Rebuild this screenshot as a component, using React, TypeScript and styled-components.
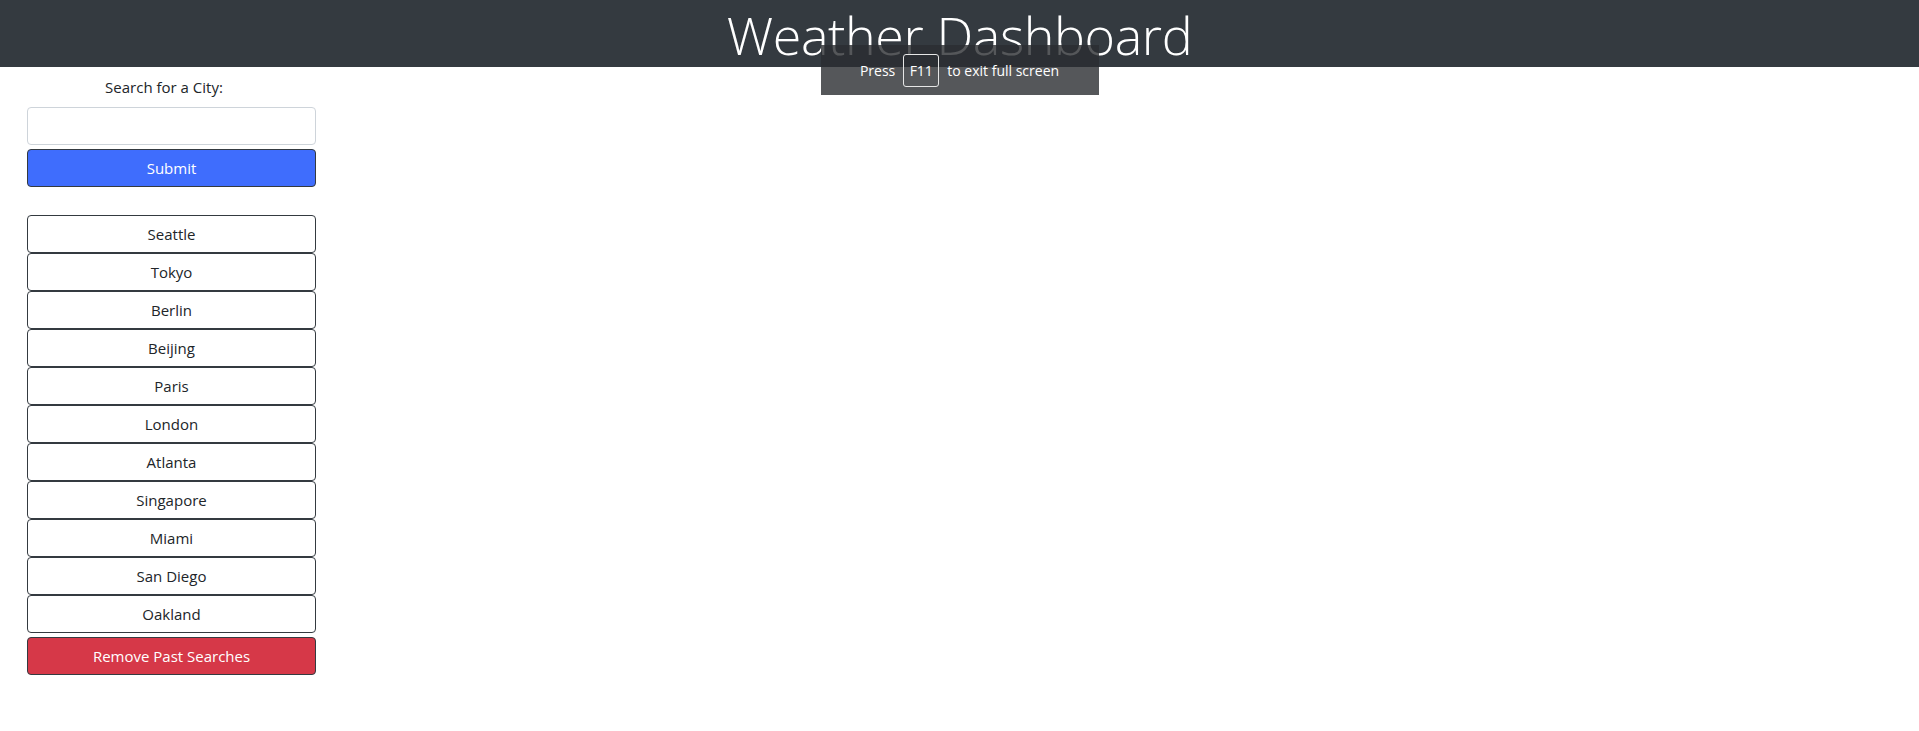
import React from "react";
import styled, { createGlobalStyle } from "styled-components";

const GlobalStyle = createGlobalStyle`
  html, body {
    margin: 0;
    padding: 0;
    background: #ffffff;
    font-family: "Open Sans", "Noto Sans", sans-serif;
    color: #212529;
  }
  * { box-sizing: border-box; }
`;

const Page = styled.div`
  position: relative;
  width: 100%;
  min-height: 731px;
`;

const Header = styled.header`
  background: #343a40;
  height: 67px;
  display: flex;
  justify-content: center;
  align-items: center;
`;

const Title = styled.h1`
  margin: 0;
  font-family: "Open Sans", sans-serif;
  font-weight: 300;
  font-size: 52px;
  line-height: 67px;
  color: #ffffff;
  letter-spacing: -0.4px;
  transform: translateY(1px);
`;

const Sidebar = styled.aside`
  width: 289px;
  margin-left: 27px;
  display: flex;
  flex-direction: column;
`;

const Label = styled.label`
  display: block;
  margin-top: 8px;
  padding-right: 15px;
  text-align: center;
  font-size: 15px;
  line-height: 24px;
  color: #212529;
`;

const Input = styled.input`
  margin-top: 8px;
  height: 38px;
  width: 100%;
  border: 1px solid #ced4da;
  border-radius: 4px;
  background: #fff;
  font-family: inherit;
  font-size: 16px;
  padding: 6px 12px;
`;

const Button = styled.button<{ $variant?: "primary" | "danger" | "outline" }>`
  display: block;
  width: 100%;
  height: 38px;
  border: 1px solid #343a40;
  border-radius: 4px;
  font-family: inherit;
  font-size: 15px;
  line-height: 24px;
  padding: 6px 12px;
  cursor: pointer;
  background: ${(p) =>
    p.$variant === "primary" ? "#3f6dfd" : p.$variant === "danger" ? "#d63848" : "#ffffff"};
  color: ${(p) => (p.$variant === "outline" ? "#212529" : "#ffffff")};
`;

const SubmitButton = styled(Button)`
  margin-top: 4px;
`;

const CityList = styled.div`
  margin-top: 28px;
  display: flex;
  flex-direction: column;
`;

const RemoveButton = styled(Button)`
  margin-top: 4px;
`;

const Toast = styled.div`
  position: absolute;
  top: 45px;
  left: 50%;
  transform: translateX(-50%);
  width: 278px;
  height: 50px;
  background: rgba(42, 45, 49, 0.8);
  display: flex;
  align-items: center;
  justify-content: center;
  gap: 8px;
  color: #ffffff;
  font-size: 14px;
  font-family: "Open Sans", sans-serif;
`;

const Key = styled.span`
  display: inline-flex;
  align-items: center;
  justify-content: center;
  width: 36px;
  height: 33px;
  border: 1px solid #e6e6e6;
  border-radius: 3px;
  font-size: 14px;
`;

const cities = [
  "Seattle",
  "Tokyo",
  "Berlin",
  "Beijing",
  "Paris",
  "London",
  "Atlanta",
  "Singapore",
  "Miami",
  "San Diego",
  "Oakland",
];

export default function App() {
  return (
    <Page>
      <GlobalStyle />
      <Header>
        <Title>Weather Dashboard</Title>
      </Header>
      <Sidebar>
        <Label htmlFor="city">Search for a City:</Label>
        <Input id="city" type="text" />
        <SubmitButton $variant="primary">Submit</SubmitButton>
        <CityList>
          {cities.map((c) => (
            <Button key={c} $variant="outline">
              {c}
            </Button>
          ))}
        </CityList>
        <RemoveButton $variant="danger">Remove Past Searches</RemoveButton>
      </Sidebar>
      <Toast>
        <span>Press</span>
        <Key>F11</Key>
        <span>to exit full screen</span>
      </Toast>
    </Page>
  );
}
